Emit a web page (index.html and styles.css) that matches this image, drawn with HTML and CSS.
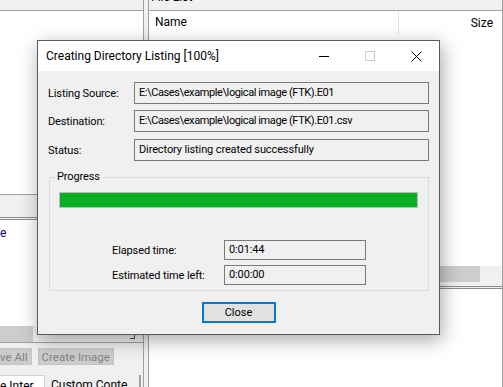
FILE: index.html
```html
<!DOCTYPE html>
<html lang="en">
  <head>
    <meta charset="UTF-8" />
    <title>Creating Directory Listing</title>
    <link rel="stylesheet" href="styles.css">
  </head>
  <body>
    <div class="app">
      <div class="left-col">
        <div class="pane-title right"><span class="pane-text">&times;</span></div>
        <div class="tree"></div>
        <div class="panel-strip"></div>
        <div class="tree-lower"><span class="tree-item">e</span></div>
        <div class="hscroll"><div class="thumb thumb-left"></div><span class="grip"></span></div>
        <div class="btn-row">
          <button class="btn-off btn-cut">ve All</button>
          <button class="btn-off">Create Image</button>
        </div>
        <div class="tabs">
          <span class="tab active">e Inter</span>
          <span class="tab">Custom Conte</span>
        </div>
      </div>
      <div class="splitter"></div>
      <div class="right-col">
        <div class="pane-title"><span class="pane-text">File List</span></div>
        <div class="list-head">
          <span class="col-name">Name</span>
          <span class="col-size">Size</span>
        </div>
        <div class="list-body"></div>
        <div class="hscroll"><div class="thumb thumb-right"></div></div>
        <div class="split-lines"></div>
        <div class="lower"></div>
      </div>
    </div>

    <div class="dialog">
      <div class="dlg-title">
        <span class="dlg-caption">Creating Directory Listing [100%]</span>
        <div class="caption-btns">
          <span class="cap-btn">
            <svg width="10" height="10" viewBox="0 0 10 10"><path d="M0 5.5h10" stroke="#000" stroke-width="1"/></svg>
          </span>
          <span class="cap-btn">
            <svg width="10" height="10" viewBox="0 0 10 10"><rect x="0.5" y="0.5" width="9" height="9" fill="none" stroke="#cccccc"/></svg>
          </span>
          <span class="cap-btn">
            <svg width="11" height="11" viewBox="0 0 11 11"><path d="M0.5 0.5l10 10M10.5 0.5l-10 10" stroke="#000" stroke-width="1"/></svg>
          </span>
        </div>
      </div>
      <div class="dlg-body">
        <div class="field-row">
          <label>Listing Source:</label>
          <div class="field path">E:\Cases\example\logical image (FTK).E01</div>
        </div>
        <div class="field-row">
          <label>Destination:</label>
          <div class="field path">E:\Cases\example\logical image (FTK).E01.csv</div>
        </div>
        <div class="field-row status-row">
          <label>Status:</label>
          <div class="field">Directory listing created successfully</div>
        </div>
        <fieldset class="group">
          <legend>Progress</legend>
          <div class="bar"><div class="bar-fill" style="width: 100%"></div></div>
          <div class="times">
            <label>Elapsed time:</label>
            <div class="time-field">0:01:44</div>
            <label>Estimated time left:</label>
            <div class="time-field">0:00:00</div>
          </div>
        </fieldset>
        <div class="dlg-actions">
          <button class="btn-default">Close</button>
        </div>
      </div>
    </div>
  </body>
</html>
```

FILE: styles.css
```css
body {
  margin: 0;
  width: 503px;
  height: 387px;
  overflow: hidden;
  position: relative;
  font-family: Roboto, "Noto Sans", sans-serif;
  font-size: 12px;
  color: #000;
  background-color: #fff;
}
.app {
  display: flex;
  height: 387px;
}
.left-col {
  width: 143px;
  display: flex;
  flex-direction: column;
  background-color: #f0f0f0;
  border-right: 1px solid #a0a0a0;
}
.splitter {
  width: 4px;
  background-color: #f0f0f0;
}
.right-col {
  flex: 1;
  display: flex;
  flex-direction: column;
  border-left: 1px solid #a0a0a0;
  border-right: 1px solid #a0a0a0;
}
.pane-title {
  height: 10px;
  border-bottom: 1px solid #a0a0a0;
  background-color: #f0f0f0;
  overflow: hidden;
  display: flex;
  padding-left: 2px;
}
.pane-title.right {
  justify-content: flex-end;
  padding-right: 5px;
}
.pane-text {
  line-height: 16px;
  margin-top: -11px;
}
.tree {
  height: 183px;
  background-color: #fff;
}
.panel-strip {
  height: 22px;
  border-top: 1px solid #a0a0a0;
  border-bottom: 3px double #8c8c8c;
}
.tree-lower {
  height: 106px;
  background-color: #fff;
  padding-top: 5px;
  box-sizing: border-box;
}
.tree-item {
  color: #00007f;
  line-height: 16px;
}
.hscroll {
  height: 16px;
  display: flex;
  align-items: flex-end;
  background-color: #f0f0f0;
}
.thumb {
  height: 16px;
  background-color: #cdcdcd;
}
.thumb-left {
  width: 33px;
}
.thumb-right {
  width: 331px;
}
.grip {
  margin-left: auto;
  margin-right: 8px;
  margin-bottom: 3px;
  width: 4px;
  height: 4px;
  border-right: 1px solid #555;
  border-bottom: 1px solid #555;
}
.btn-row {
  height: 33px;
  border-top: 1px solid #a0a0a0;
  display: flex;
  gap: 6px;
  padding-top: 5px;
  box-sizing: border-box;
}
.btn-off {
  height: 17px;
  padding: 0 3px;
  font: inherit;
  font-size: 11.5px;
  line-height: 14px;
  color: #838383;
  background-color: #cccccc;
  border: 1px solid #c4c4c4;
}
.btn-cut {
  padding-left: 0;
  border-left: none;
}
.tabs {
  flex: 1;
  display: flex;
  overflow: hidden;
  border-right: 2px solid #a0a0a0;
  margin-right: 2px;
}
.tab {
  padding: 2px 6px 0 6px;
  line-height: 16px;
}
.tab.active {
  width: 38px;
  padding-left: 0;
  background-color: #fff;
  border-top: 1px solid #d0d0d0;
  border-right: 1px solid #d0d0d0;
}
.list-head {
  height: 23px;
  display: flex;
  align-items: center;
  background-color: #fff;
}
.col-name {
  width: 243px;
  padding-left: 6px;
  line-height: 23px;
  border-right: 1px solid #e5e5e5;
}
.col-size {
  flex: 1;
  text-align: right;
  padding-right: 9px;
}
.list-body {
  height: 232px;
  background-color: #fff;
}
.split-lines {
  height: 4px;
  background-color: #f0f0f0;
  border-bottom: 3px double #8c8c8c;
}
.lower {
  flex: 1;
  background-color: #fff;
}
.dialog {
  position: absolute;
  left: 37px;
  top: 40px;
  width: 401px;
  border: 1px solid #5a5a5a;
  background-color: #f0f0f0;
  box-shadow: 2px 5px 18px rgba(0, 0, 0, 0.35);
}
.dlg-title {
  height: 30px;
  display: flex;
  align-items: center;
  background-color: #fff;
}
.dlg-caption {
  flex: 1;
  padding-left: 8px;
}
.caption-btns {
  display: flex;
  height: 100%;
}
.cap-btn {
  width: 46px;
  display: flex;
  align-items: center;
  justify-content: center;
}
.cap-btn svg {
  display: block;
}
.dlg-body {
  padding: 11px 10px 11px 10px;
  font-size: 11px;
  letter-spacing: -0.12px;
}
.field-row {
  display: grid;
  grid-template-columns: 86px 1fr;
  align-items: center;
}
.field-row + .field-row {
  margin-top: 6px;
}
.status-row {
  margin-top: 7px !important;
}
.field {
  height: 20px;
  line-height: 20px;
  padding: 0 4px;
  border: 1px solid #7a7a7a;
  white-space: nowrap;
}
.field.path {
  letter-spacing: -0.4px;
}
.group {
  margin: 8px 0 0 1px;
  padding: 0 10px 5px 9px;
  border: 1px solid #dcdcdc;
  min-width: 0;
}
.group legend {
  padding: 0 2px;
  margin-left: -4px;
  line-height: 16px;
}
.bar {
  margin-top: 7px;
  height: 14px;
  border: 1px solid #bcbcbc;
  background-color: #e6e6e6;
}
.bar-fill {
  height: 100%;
  background-color: #06b025;
}
.times {
  display: grid;
  grid-template-columns: 112px 142px;
  row-gap: 5px;
  margin: 32px 0 0 53px;
  align-items: center;
}
.time-field {
  height: 18px;
  line-height: 18px;
  padding: 0 4px;
  border: 1px solid #7a7a7a;
}
.dlg-actions {
  display: flex;
  justify-content: center;
  margin-top: 11px;
}
.btn-default {
  width: 74px;
  height: 21px;
  padding: 0;
  font: inherit;
  line-height: 16px;
  color: #000;
  background-color: #e1e1e1;
  border: 2px solid #0078d7;
}
```
